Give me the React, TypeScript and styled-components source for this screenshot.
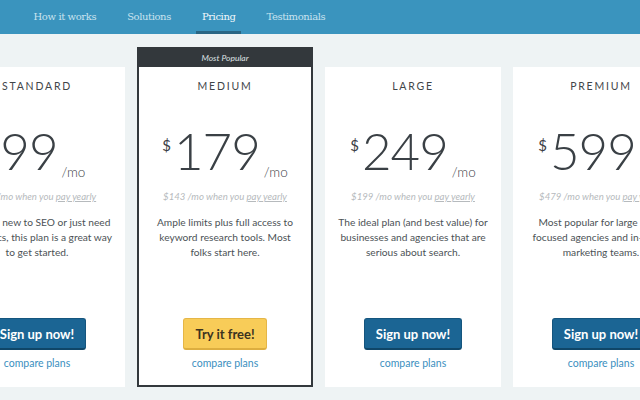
import React from "react";
import styled, { createGlobalStyle } from "styled-components";

const Global = createGlobalStyle`
  html, body { margin: 0; padding: 0; }
  body {
    background: #eef3f4;
    width: 640px;
    height: 400px;
    overflow: hidden;
    font-family: Lato, "Open Sans", sans-serif;
  }
`;

const NavBar = styled.nav`
  height: 34px;
  background: #3a94be;
  display: flex;
  align-items: stretch;
  padding-left: 18px;
`;

const NavItem = styled.a`
  display: flex;
  align-items: stretch;
  padding: 0 9.5px;
  text-decoration: none;
  cursor: pointer;
`;

const NavLabel = styled.span<{ $active?: boolean }>`
  display: flex;
  align-items: center;
  padding: 1px 6px 0;
  font-family: "DejaVu Serif", serif;
  font-size: 10px;
  letter-spacing: -0.4px;
  color: ${(p) => (p.$active ? "#f2f9fc" : "#c9e3ef")};
  border-bottom: 3px solid ${(p) => (p.$active ? "#2a6684" : "transparent")};
`;

const Row = styled.main`
  display: flex;
  align-items: flex-end;
  gap: 12px;
  margin-left: -51px;
  padding-top: 13px;
`;

const Card = styled.section<{ $featured?: boolean }>`
  flex: 0 0 176px;
  box-sizing: border-box;
  display: flex;
  flex-direction: column;
  background: #fff;
  border: ${(p) => (p.$featured ? "2px solid #33383c" : "none")};
`;

const Ribbon = styled.div`
  height: 18px;
  background: #33383c;
  color: #dfe2e4;
  font-size: 8.5px;
  font-style: italic;
  display: flex;
  align-items: center;
  justify-content: center;
`;

const Body = styled.div<{ $featured?: boolean }>`
  height: ${(p) => (p.$featured ? 318 : 320)}px;
  box-sizing: border-box;
  display: flex;
  flex-direction: column;
  align-items: center;
  padding: 12px ${(p) => (p.$featured ? 12 : 10)}px ${(p) => (p.$featured ? 15 : 17)}px;
  text-align: center;
`;

const Title = styled.h2`
  margin: 0;
  font-size: 10.5px;
  line-height: 14px;
  font-weight: 400;
  letter-spacing: 1.8px;
  color: #3f4549;
`;

const Price = styled.div`
  margin-top: 33px;
  display: flex;
  align-items: flex-start;
  height: 50px;
  color: #3a4045;
`;

const Currency = styled.span`
  font-size: 15px;
  line-height: 15px;
  margin-top: 12px;
  margin-right: 3px;
`;

const Amount = styled.span`
  font-size: 51px;
  line-height: 50px;
  font-weight: 300;
  letter-spacing: -1px;
`;

const Per = styled.span`
  align-self: flex-end;
  font-size: 13.5px;
  line-height: 14px;
  margin-left: 4px;
  margin-bottom: -3px;
  font-weight: 300;
`;

const Yearly = styled.p`
  margin: 14px 0 0;
  font-size: 9.6px;
  line-height: 14px;
  font-style: italic;
  color: #b6babd;
  white-space: nowrap;

  u {
    text-decoration: underline;
  }
`;

const Desc = styled.p`
  margin: 11px 0 0;
  font-size: 10.2px;
  line-height: 15px;
  color: #4c5256;
`;

const Button = styled.button<{ $variant: "blue" | "yellow" }>`
  margin-top: auto;
  height: 32px;
  padding: 0 11px;
  border-radius: 3px;
  font-family: Lato, sans-serif;
  font-weight: 700;
  font-size: 13px;
  cursor: pointer;
  background: ${(p) => (p.$variant === "yellow" ? "#f8cc58" : "#1b6594")};
  color: ${(p) => (p.$variant === "yellow" ? "#3b3320" : "#ffffff")};
  border: 1px solid ${(p) => (p.$variant === "yellow" ? "#e5b647" : "#15557e")};
  border-bottom: 2px solid ${(p) => (p.$variant === "yellow" ? "#ddae3f" : "#0f4668")};
`;

const Compare = styled.a`
  margin-top: 6px;
  font-size: 10.5px;
  line-height: 14px;
  color: #3b8fc0;
  text-decoration: none;
`;

type Plan = {
  name: string;
  price: string;
  yearly: string;
  desc: string;
  cta: string;
  featured?: boolean;
};

const plans: Plan[] = [
  {
    name: "STANDARD",
    price: "99",
    yearly: "$79",
    desc: "If you're new to SEO or just need the basics, this plan is a great way to get started.",
    cta: "Sign up now!",
  },
  {
    name: "MEDIUM",
    price: "179",
    yearly: "$143",
    desc: "Ample limits plus full access to keyword research tools. Most folks start here.",
    cta: "Try it free!",
    featured: true,
  },
  {
    name: "LARGE",
    price: "249",
    yearly: "$199",
    desc: "The ideal plan (and best value) for businesses and agencies that are serious about search.",
    cta: "Sign up now!",
  },
  {
    name: "PREMIUM",
    price: "599",
    yearly: "$479",
    desc: "Most popular for large SEO-focused agencies and in-house marketing teams.",
    cta: "Sign up now!",
  },
];

const navItems = ["How it works", "Solutions", "Pricing", "Testimonials"];

export default function App() {
  return (
    <>
      <Global />
      <NavBar>
        {navItems.map((n) => (
          <NavItem key={n}>
            <NavLabel $active={n === "Pricing"}>{n}</NavLabel>
          </NavItem>
        ))}
      </NavBar>
      <Row>
        {plans.map((p) => (
          <Card key={p.name} $featured={p.featured}>
            {p.featured && <Ribbon>Most Popular</Ribbon>}
            <Body $featured={p.featured}>
              <Title>{p.name}</Title>
              <Price>
                <Currency>$</Currency>
                <Amount>{p.price}</Amount>
                <Per>/mo</Per>
              </Price>
              <Yearly>
                {p.yearly} /mo when you <u>pay yearly</u>
              </Yearly>
              <Desc>{p.desc}</Desc>
              <Button $variant={p.featured ? "yellow" : "blue"}>{p.cta}</Button>
              <Compare>compare plans</Compare>
            </Body>
          </Card>
        ))}
      </Row>
    </>
  );
}
